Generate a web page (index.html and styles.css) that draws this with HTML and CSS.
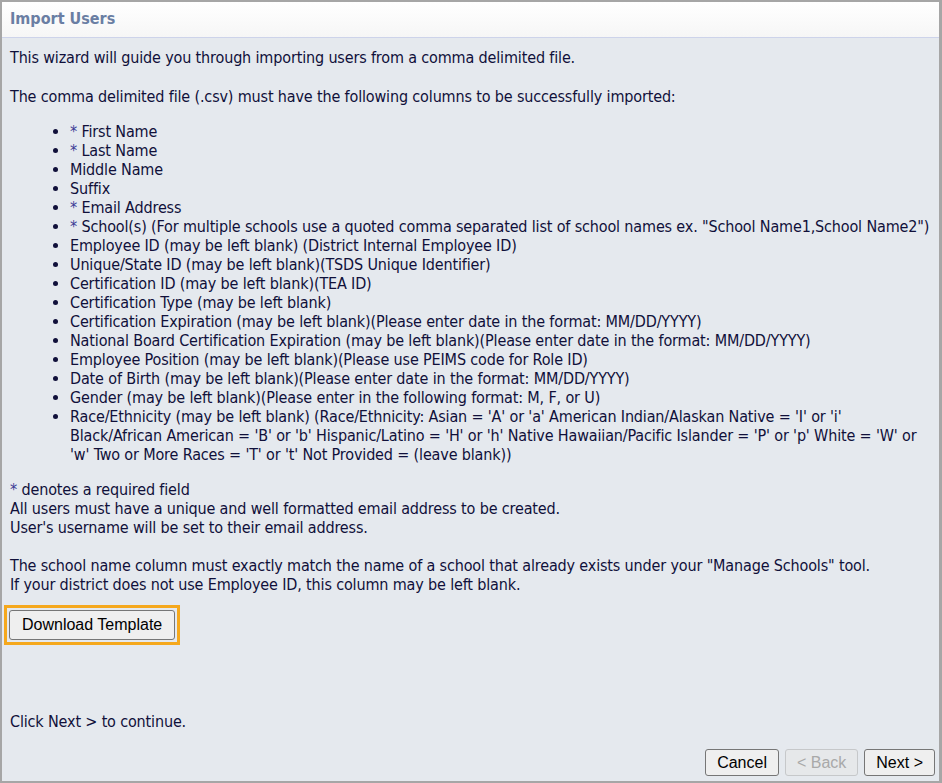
FILE: index.html
```html
<!DOCTYPE html>
<html>
	<head>
		<title>Import Users</title>
		<meta charset="utf-8">
		<link rel="stylesheet" href="styles.css">
	</head>
	<body>
		<div class="wizard">
			<div class="wizard-header">Import Users</div>
			<div class="wizard-body">
				<p class="intro">This wizard will guide you through importing users from a comma delimited file.</p>
				<p class="intro-cols">The comma delimited file (.csv) must have the following columns to be successfully imported:</p>
				<ul class="columns">
					<li><span class="req">*</span> First Name</li>
					<li><span class="req">*</span> Last Name</li>
					<li>Middle Name</li>
					<li>Suffix</li>
					<li><span class="req">*</span> Email Address</li>
					<li><span class="req">*</span> School(s) (For multiple schools use a quoted comma separated list of school names ex. "School Name1,School Name2")</li>
					<li>Employee ID (may be left blank) (District Internal Employee ID)</li>
					<li>Unique/State ID (may be left blank)(TSDS Unique Identifier)</li>
					<li>Certification ID (may be left blank)(TEA ID)</li>
					<li>Certification Type (may be left blank)</li>
					<li>Certification Expiration (may be left blank)(Please enter date in the format: MM/DD/YYYY)</li>
					<li>National Board Certification Expiration (may be left blank)(Please enter date in the format: MM/DD/YYYY)</li>
					<li>Employee Position (may be left blank)(Please use PEIMS code for Role ID)</li>
					<li>Date of Birth (may be left blank)(Please enter date in the format: MM/DD/YYYY)</li>
					<li>Gender (may be left blank)(Please enter in the following format: M, F, or U)</li>
					<li>Race/Ethnicity (may be left blank) (Race/Ethnicity: Asian = 'A' or 'a' American Indian/Alaskan Native = 'I' or 'i' Black/African American = 'B' or 'b' Hispanic/Latino = 'H' or 'h' Native Hawaiian/Pacific Islander = 'P' or 'p' White = 'W' or 'w' Two or More Races = 'T' or 't' Not Provided = (leave blank))</li>
				</ul>
				<p class="notes">
					<span class="req">*</span> denotes a required field<br>
					All users must have a unique and well formatted email address to be created.<br>
					User's username will be set to their email address.<br>
					<br>
					The school name column must exactly match the name of a school that already exists under your "Manage Schools" tool.<br>
					If your district does not use Employee ID, this column may be left blank.
				</p>
				<div class="focus-ring">
					<button class="btn btn-template" type="button">Download Template</button>
				</div>
			</div>
			<div class="wizard-footer">
				<p class="continue">Click Next &gt; to continue.</p>
				<div class="nav-buttons">
					<button class="btn btn-nav" type="button">Cancel</button>
					<button class="btn btn-nav" type="button" disabled>&lt; Back</button>
					<button class="btn btn-nav" type="button">Next &gt;</button>
				</div>
			</div>
		</div>
	</body>
</html>
```

FILE: styles.css
```css
html{
	font-family: "DejaVu Sans Condensed", "DejaVu Sans", sans-serif;
	font-size: 16px;
	line-height: 19px;
	letter-spacing: -0.15px;
	color: #10103a;
}
body{
	margin: 0;
	background-color: #e5e9ee;
}
.wizard{
	height: 783px;
	box-sizing: border-box;
	border: 2px solid #a6a6a6;
	border-right-width: 3px;
	display: flex;
	flex-direction: column;
	background-color: #e5e9ee;
}
.wizard-header{
	height: 35px;
	line-height: 34px;
	padding: 0 8px;
	letter-spacing: 0;
	font-weight: bold;
	color: #6a7ea3;
	background: linear-gradient(#ffffff, #f6f6f6);
	border-bottom: 1px solid #cdd3ea;
}
.wizard-body{
	flex: 1;
	padding: 10px 2px 0 8px;
}
p{
	margin: 0;
}
.intro{
	margin-bottom: 20px;
}
.columns{
	margin: 16px 0;
	padding-left: 60px;
}
.req{
	color: #3c3c96;
}
.btn{
	font-family: "Liberation Sans", Arial, sans-serif;
	font-size: 16px;
	letter-spacing: 0;
	color: #000;
	background-color: #efefef;
	border: 1px solid #767676;
	border-radius: 3px;
}
.focus-ring{
	display: inline-block;
	margin: 11px 0 0 -6px;
	padding: 2px;
	border: 3px solid #f5a81c;
}
.btn-template{
	display: block;
	height: 30px;
	padding: 0 12px;
}
.wizard-footer{
	padding: 0 4px 5px 8px;
}
.continue{
	margin-bottom: 18px;
}
.nav-buttons{
	display: flex;
	justify-content: flex-end;
	gap: 6px;
}
.btn-nav{
	height: 27px;
	padding: 0 11px;
}
.btn-nav:disabled{
	color: #a9a9a9;
	background-color: #e6e8ea;
	border-color: #c6c8ca;
}
```
